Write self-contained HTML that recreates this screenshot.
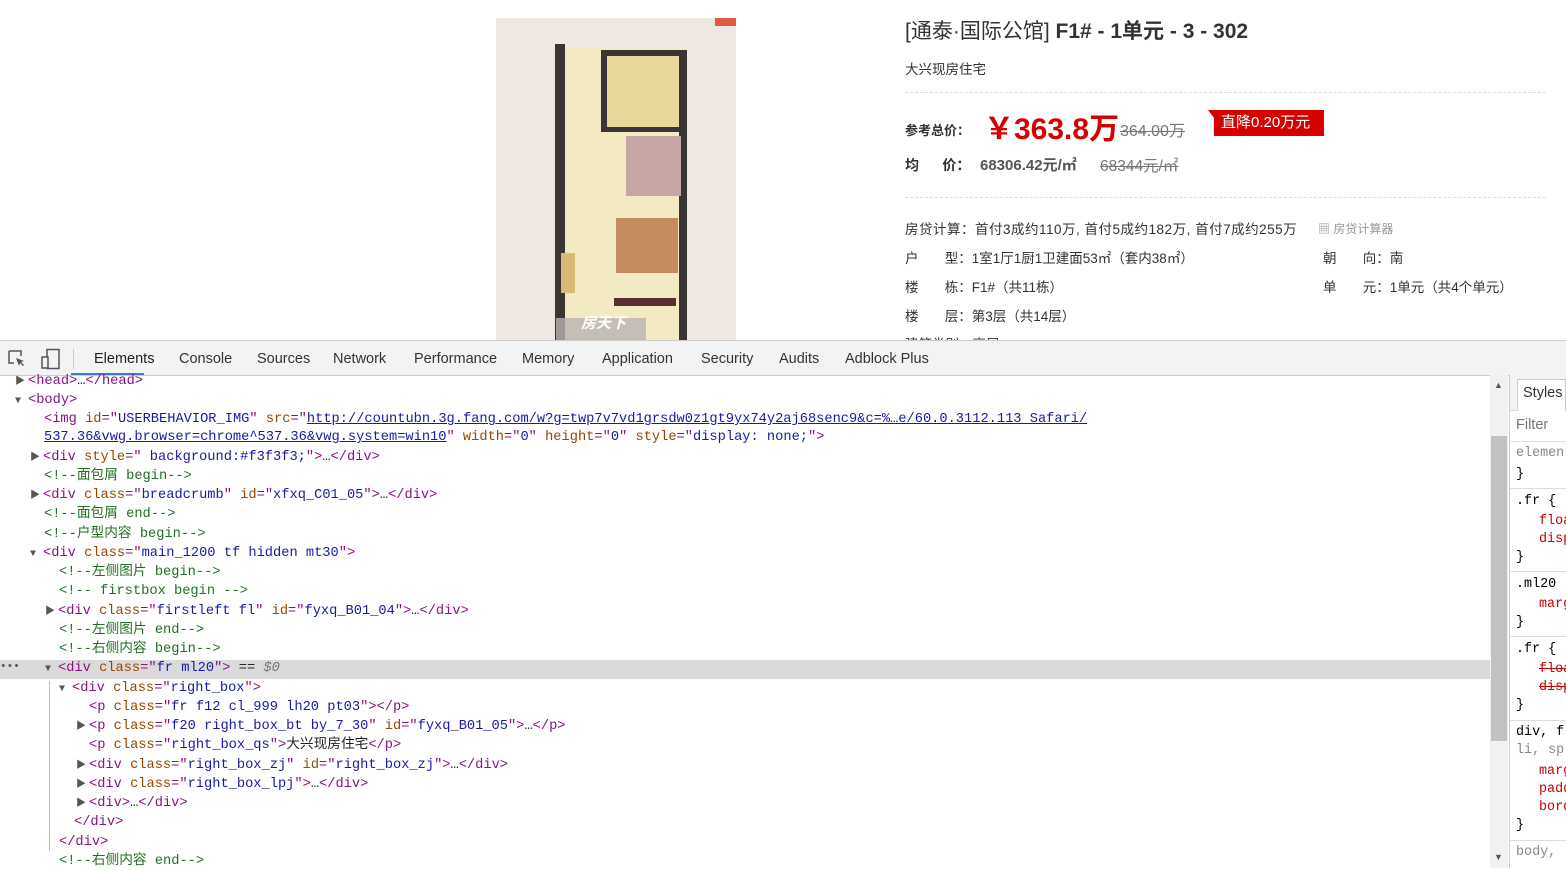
<!DOCTYPE html>
<html><head><meta charset="utf-8">
<style>
*{margin:0;padding:0;box-sizing:border-box}
body{width:1566px;height:868px;overflow:hidden;background:#fff;font-family:"Liberation Sans","Noto Sans CJK SC",sans-serif;position:relative}
.a{position:absolute;white-space:nowrap}
.cn{color:#333;font-size:13.5px}
.dash{position:absolute;left:905px;width:641px;border-top:1px dashed #ddd}
#dt{position:absolute;left:0;top:340px;width:1566px;height:528px;background:#fff;border-top:1px solid #ccc}
#tabs{position:absolute;left:0;top:0;width:1566px;height:35px;background:#f3f3f3;border-bottom:1px solid #ccc}
.tab{position:absolute;top:10px;font-size:14.5px;color:#333}
.ln{position:absolute;font-family:"Liberation Mono","Noto Sans CJK SC",monospace;font-size:13.7px;white-space:nowrap;line-height:19px;top:0}
.t{color:#881280}.n{color:#994500}.v{color:#1a1aa6}.c{color:#236e25}.p{color:#a894a6}.k{color:#222}
.u{color:#1a1aa6;text-decoration:underline}
.tri{color:#555;font-size:10px;display:inline-block;width:13px}
.sp{position:absolute;font-family:"Liberation Mono",monospace;font-size:13.4px;white-space:nowrap}
</style></head><body>

<div class="a" style="left:496px;top:18px;width:240px;height:322px;background:#efe7e1;overflow:hidden">
  <div style="position:absolute;left:59px;top:26px;width:10px;height:296px;background:#3a3535"></div>
  <div style="position:absolute;left:69px;top:30px;width:120px;height:292px;background:#f3e9c2"></div>
  <div style="position:absolute;left:105px;top:32px;width:85px;height:82px;background:#e8d79a;border:6px solid #3a3535;border-bottom-width:5px"></div>
  <div style="position:absolute;left:183px;top:32px;width:8px;height:290px;background:#3a3535"></div>
  <div style="position:absolute;left:130px;top:118px;width:55px;height:60px;background:#c6a6a4"></div>
  <div style="position:absolute;left:120px;top:200px;width:62px;height:55px;background:#c48a60"></div>
  <div style="position:absolute;left:118px;top:280px;width:62px;height:8px;background:#5a2e2e"></div>
  <div style="position:absolute;left:65px;top:235px;width:14px;height:40px;background:#d8b978"></div>
  <div style="position:absolute;left:60px;top:300px;width:90px;height:22px;background:#b9b3b3;opacity:.8"></div>
  <div style="position:absolute;left:85px;top:294px;color:#fff;font-size:15px;font-weight:bold;font-style:italic">房天下</div>
  <div style="position:absolute;left:219px;top:0;width:21px;height:8px;background:#e05a40"></div>
</div>

<div class="a" style="left:905px;top:15px;font-size:21px;color:#333">[通泰·国际公馆] <b style="font-weight:bold">F1# - 1单元 - 3 - 302</b></div>
<div class="a cn" style="left:905px;top:58px">大兴现房住宅</div>
<div class="dash" style="top:92px"></div>
<div class="a" style="left:905px;top:120px;font-size:13px;font-weight:bold;color:#333">参考总价：</div>
<div class="a" style="left:984px;top:104px;font-size:30px;font-weight:bold;color:#d60000">￥363.8万</div>
<div class="a" style="left:1120px;top:117px;font-size:16px;color:#777;text-decoration:line-through">364.00万</div>
<div class="a" style="left:1214px;top:110px;width:110px;height:26px;background:#d60000;color:#fff;font-size:15px;line-height:26px;padding-left:7px">直降0.20万元</div>
<div class="a" style="left:1208px;top:110px;width:0;height:0;border-top:8px solid #d60000;border-left:6px solid transparent"></div>
<div class="a" style="left:905px;top:155px;font-size:14px;font-weight:bold;color:#333">均&nbsp;&nbsp;&nbsp;&nbsp;&nbsp;&nbsp;价：</div>
<div class="a" style="left:980px;top:154px;font-size:15px;font-weight:bold;color:#555">68306.42元/㎡</div>
<div class="a" style="left:1100px;top:154px;font-size:15.5px;color:#777;text-decoration:line-through">68344元/㎡</div>
<div class="dash" style="top:197px"></div>
<div class="a cn" style="left:905px;top:218px;letter-spacing:0.5px">房贷计算：首付3成约110万, 首付5成约182万, 首付7成约255万</div>
<div class="a" style="left:1318px;top:220px;font-size:12px;color:#999">▦ 房贷计算器</div>
<div class="a cn" style="left:905px;top:247px">户&nbsp;&nbsp;&nbsp;&nbsp;&nbsp;&nbsp;&nbsp;型：1室1厅1厨1卫建面53㎡（套内38㎡）</div>
<div class="a cn" style="left:1323px;top:247px">朝&nbsp;&nbsp;&nbsp;&nbsp;&nbsp;&nbsp;&nbsp;向：南</div>
<div class="a cn" style="left:905px;top:276px">楼&nbsp;&nbsp;&nbsp;&nbsp;&nbsp;&nbsp;&nbsp;栋：F1#（共11栋）</div>
<div class="a cn" style="left:1323px;top:276px">单&nbsp;&nbsp;&nbsp;&nbsp;&nbsp;&nbsp;&nbsp;元：1单元（共4个单元）</div>
<div class="a cn" style="left:905px;top:305px">楼&nbsp;&nbsp;&nbsp;&nbsp;&nbsp;&nbsp;&nbsp;层：第3层（共14层）</div>
<div class="a cn" style="left:905px;top:333px">建筑类别：高层</div>

<div id="dt">
 <div id="tabs">
  <svg style="position:absolute;left:8px;top:9px" width="18" height="18" viewBox="0 0 18 18"><path d="M1 1h12v5M1 1v12h5" fill="none" stroke="#555" stroke-width="1.5"/><path d="M8 8l8 3-3 1 3 3-1 1-3-3-1 3z" fill="#555"/></svg>
  <svg style="position:absolute;left:40px;top:7px" width="22" height="22" viewBox="0 0 22 22"><rect x="7" y="1.5" width="12" height="19" fill="none" stroke="#555" stroke-width="1.5"/><rect x="2" y="9" width="6" height="11" fill="#f3f3f3" stroke="#555" stroke-width="1.5"/></svg>
  <div style="position:absolute;left:73px;top:8px;width:1px;height:20px;background:#ccc"></div>
  <div class="tab" style="left:94px;color:#222">Elements</div>
  <div style="position:absolute;left:71px;top:32px;width:73px;height:2px;background:#3879d9"></div>
  <div class="tab" style="left:179px">Console</div>
  <div class="tab" style="left:257px">Sources</div>
  <div class="tab" style="left:333px">Network</div>
  <div class="tab" style="left:414px">Performance</div>
  <div class="tab" style="left:522px">Memory</div>
  <div class="tab" style="left:602px">Application</div>
  <div class="tab" style="left:701px">Security</div>
  <div class="tab" style="left:779px">Audits</div>
  <div class="tab" style="left:845px">Adblock Plus</div>
 </div>
 <div style="position:absolute;left:0;top:319px;width:1490px;height:19px;background:#dadada"></div>
 <div style="position:absolute;left:49px;top:340px;width:1px;height:170px;background:#a8c1ea"></div>
 <div class="sp" style="left:0;top:320px;color:#555;font-size:11px">•••</div>
</div>

<div style="position:absolute;top:375px;left:0">
<div class="ln" style="left:15px;top:-3px"><span class="tri">▶</span><span class="t">&lt;head&gt;</span><span class="k">…</span><span class="t">&lt;/head&gt;</span></div>
<div class="ln" style="left:15px;top:16px"><span class="tri">▼</span><span class="t">&lt;body&gt;</span></div>
<div class="ln" style="left:44px;top:35px"><span class="t">&lt;img</span> <span class="n">id</span><span class="t">="</span><span class="v">USERBEHAVIOR_IMG</span><span class="t">"</span> <span class="n">src</span><span class="t">="</span><span class="u">http://countubn.3g.fang.com/w?g=twp7v7vd1grsdw0z1gt9yx74y2aj68senc9&amp;c=%…e/60.0.3112.113 Safari/</span></div>
<div class="ln" style="left:44px;top:53px"><span class="u">537.36&amp;vwg.browser=chrome^537.36&amp;vwg.system=win10</span><span class="t">"</span> <span class="n">width</span><span class="t">="</span><span class="v">0</span><span class="t">"</span> <span class="n">height</span><span class="t">="</span><span class="v">0</span><span class="t">"</span> <span class="n">style</span><span class="t">="</span><span class="v">display: none;</span><span class="t">"&gt;</span></div>
<div class="ln" style="left:30px;top:73px"><span class="tri">▶</span><span class="t">&lt;div</span> <span class="n">style</span><span class="t">="</span><span class="v"> background:#f3f3f3;</span><span class="t">"&gt;</span><span class="k">…</span><span class="t">&lt;/div&gt;</span></div>
<div class="ln c" style="left:44px;top:92px">&lt;!--面包屑 begin--&gt;</div>
<div class="ln" style="left:30px;top:111px"><span class="tri">▶</span><span class="t">&lt;div</span> <span class="n">class</span><span class="t">="</span><span class="v">breadcrumb</span><span class="t">"</span> <span class="n">id</span><span class="t">="</span><span class="v">xfxq_C01_05</span><span class="t">"&gt;</span><span class="k">…</span><span class="t">&lt;/div&gt;</span></div>
<div class="ln c" style="left:44px;top:130px">&lt;!--面包屑 end--&gt;</div>
<div class="ln c" style="left:44px;top:150px">&lt;!--户型内容 begin--&gt;</div>
<div class="ln" style="left:30px;top:169px"><span class="tri">▼</span><span class="t">&lt;div</span> <span class="n">class</span><span class="t">="</span><span class="v">main_1200 tf hidden mt30</span><span class="t">"&gt;</span></div>
<div class="ln c" style="left:59px;top:188px">&lt;!--左侧图片 begin--&gt;</div>
<div class="ln c" style="left:59px;top:207px">&lt;!-- firstbox begin --&gt;</div>
<div class="ln" style="left:45px;top:227px"><span class="tri">▶</span><span class="t">&lt;div</span> <span class="n">class</span><span class="t">="</span><span class="v">firstleft fl</span><span class="t">"</span> <span class="n">id</span><span class="t">="</span><span class="v">fyxq_B01_04</span><span class="t">"&gt;</span><span class="k">…</span><span class="t">&lt;/div&gt;</span></div>
<div class="ln c" style="left:59px;top:246px">&lt;!--左侧图片 end--&gt;</div>
<div class="ln c" style="left:59px;top:265px">&lt;!--右侧内容 begin--&gt;</div>
<div class="ln" style="left:45px;top:284px"><span class="tri">▼</span><span class="t">&lt;div</span> <span class="n">class</span><span class="t">="</span><span class="v">fr ml20</span><span class="t">"&gt;</span> <span class="k">== </span><i style="color:#777">$0</i></div>
<div class="ln" style="left:59px;top:304px"><span class="tri">▼</span><span class="t">&lt;div</span> <span class="n">class</span><span class="t">="</span><span class="v">right_box</span><span class="t">"&gt;</span></div>
<div class="ln" style="left:89px;top:323px"><span class="t">&lt;p</span> <span class="n">class</span><span class="t">="</span><span class="v">fr f12 cl_999 lh20 pt03</span><span class="t">"&gt;&lt;/p&gt;</span></div>
<div class="ln" style="left:76px;top:342px"><span class="tri">▶</span><span class="t">&lt;p</span> <span class="n">class</span><span class="t">="</span><span class="v">f20 right_box_bt by_7_30</span><span class="t">"</span> <span class="n">id</span><span class="t">="</span><span class="v">fyxq_B01_05</span><span class="t">"&gt;</span><span class="k">…</span><span class="t">&lt;/p&gt;</span></div>
<div class="ln" style="left:89px;top:361px"><span class="t">&lt;p</span> <span class="n">class</span><span class="t">="</span><span class="v">right_box_qs</span><span class="t">"&gt;</span><span class="k">大兴现房住宅</span><span class="t">&lt;/p&gt;</span></div>
<div class="ln" style="left:76px;top:381px"><span class="tri">▶</span><span class="t">&lt;div</span> <span class="n">class</span><span class="t">="</span><span class="v">right_box_zj</span><span class="t">"</span> <span class="n">id</span><span class="t">="</span><span class="v">right_box_zj</span><span class="t">"&gt;</span><span class="k">…</span><span class="t">&lt;/div&gt;</span></div>
<div class="ln" style="left:76px;top:400px"><span class="tri">▶</span><span class="t">&lt;div</span> <span class="n">class</span><span class="t">="</span><span class="v">right_box_lpj</span><span class="t">"&gt;</span><span class="k">…</span><span class="t">&lt;/div&gt;</span></div>
<div class="ln" style="left:76px;top:419px"><span class="tri">▶</span><span class="t">&lt;div&gt;</span><span class="k">…</span><span class="t">&lt;/div&gt;</span></div>
<div class="ln t" style="left:74px;top:438px">&lt;/div&gt;</div>
<div class="ln t" style="left:59px;top:458px">&lt;/div&gt;</div>
<div class="ln c" style="left:59px;top:477px">&lt;!--右侧内容 end--&gt;</div>
</div>

<div style="position:absolute;left:1490px;top:375px;width:18px;height:493px;background:#f1f1f1"></div>
<div style="position:absolute;left:1491px;top:436px;width:16px;height:305px;background:#c1c1c1"></div>
<div class="a" style="left:1494px;top:380px;font-size:9px;color:#555">▲</div>
<div class="a" style="left:1494px;top:852px;font-size:9px;color:#555">▼</div>
<div style="position:absolute;left:1509px;top:375px;width:57px;height:493px;background:#fff;border-left:1px solid #ccc"></div>
<div style="position:absolute;left:1510px;top:375px;width:56px;height:36px;background:#f3f3f3;border-bottom:1px solid #ddd"></div>
<div style="position:absolute;left:1517px;top:379px;width:49px;height:32px;background:#fff;border:1px solid #ccc;border-bottom:none"></div>
<div class="a" style="left:1523px;top:385px;font-size:14.5px;color:#333">Styles</div>
<div class="a" style="left:1516px;top:417px;font-size:14.5px;color:#777">Filter</div>
<div style="position:absolute;left:1510px;top:441px;width:56px;border-top:1px solid #ddd"></div>
<div class="sp" style="left:1516px;top:446px;color:#888">elemen</div>
<div class="sp" style="left:1516px;top:467px">}</div>
<div style="position:absolute;left:1510px;top:488px;width:56px;border-top:1px solid #ddd"></div>
<div class="sp" style="left:1516px;top:494px">.fr {</div>
<div class="sp" style="left:1539px;top:514px;color:#c80000">floa</div>
<div class="sp" style="left:1539px;top:532px;color:#c80000">disp</div>
<div class="sp" style="left:1516px;top:550px">}</div>
<div style="position:absolute;left:1510px;top:571px;width:56px;border-top:1px solid #ddd"></div>
<div class="sp" style="left:1516px;top:577px">.ml20</div>
<div class="sp" style="left:1539px;top:597px;color:#c80000">marg</div>
<div class="sp" style="left:1516px;top:615px">}</div>
<div style="position:absolute;left:1510px;top:636px;width:56px;border-top:1px solid #ddd"></div>
<div class="sp" style="left:1516px;top:642px">.fr {</div>
<div class="sp" style="left:1539px;top:662px;color:#c80000;text-decoration:line-through">floa</div>
<div class="sp" style="left:1539px;top:680px;color:#c80000;text-decoration:line-through">disp</div>
<div class="sp" style="left:1516px;top:698px">}</div>
<div style="position:absolute;left:1510px;top:720px;width:56px;border-top:1px solid #ddd"></div>
<div class="sp" style="left:1516px;top:725px">div, f</div>
<div class="sp" style="left:1516px;top:743px;color:#888">li, sp</div>
<div class="sp" style="left:1539px;top:764px;color:#c80000">marg</div>
<div class="sp" style="left:1539px;top:782px;color:#c80000">padd</div>
<div class="sp" style="left:1539px;top:800px;color:#c80000">bord</div>
<div class="sp" style="left:1516px;top:818px">}</div>
<div style="position:absolute;left:1510px;top:840px;width:56px;border-top:1px solid #ddd"></div>
<div class="sp" style="left:1516px;top:845px;color:#888">body,</div>
</body></html>
